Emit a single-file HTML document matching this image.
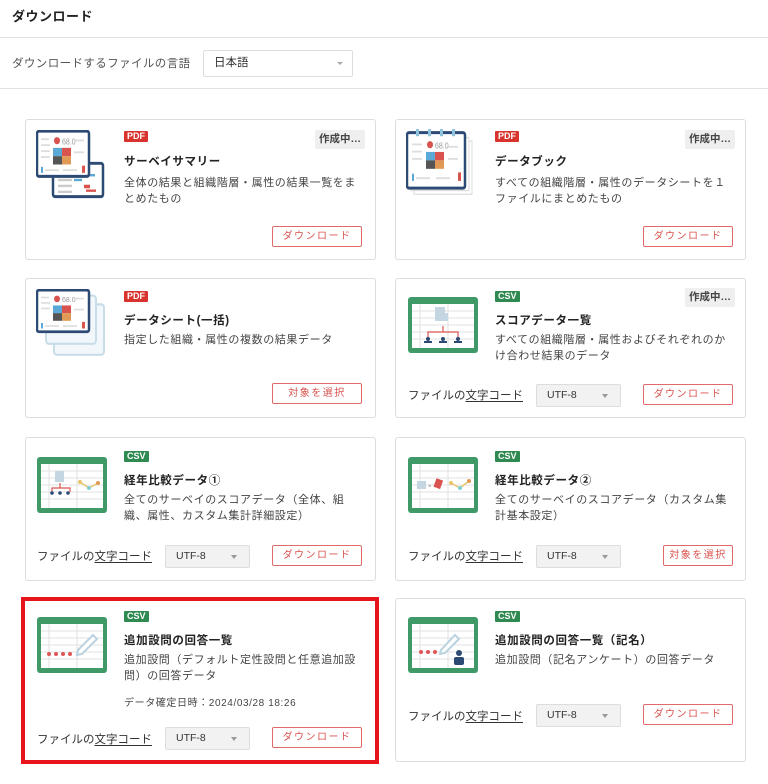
<!DOCTYPE html>
<html><head><meta charset="utf-8"><style>
*{margin:0;padding:0;box-sizing:border-box}
body{width:768px;height:784px;background:#fff;font-family:"Liberation Sans","Noto Sans CJK JP",sans-serif;color:#333;position:relative;overflow:hidden}
.a{position:absolute}
.card{position:absolute;border:1px solid #ddd;border-radius:3px;background:#fff}
.badge{position:absolute;font-size:9px;font-weight:bold;color:#fff;padding:0 3px;line-height:11px;border-radius:1px;font-family:"Liberation Sans",sans-serif}
.pdf{background:#d9332e}.csv{background:#2e8a50}
.ttl{position:absolute;font-size:11.5px;font-weight:bold;color:#222;letter-spacing:.6px;white-space:nowrap}
.desc{position:absolute;font-size:11px;line-height:16px;color:#444;letter-spacing:.6px;width:236px}
.btn{position:absolute;height:21px;border:1px solid #e06a6a;border-radius:2px;color:#d9534f;font-size:10px;text-align:center;line-height:20px;letter-spacing:1.5px;background:#fff}
.busy{position:absolute;background:#efefef;font-size:10.5px;font-weight:bold;color:#444;padding:0 4px;line-height:19px;border-radius:2px}
.fc{position:absolute;font-size:11.5px;color:#333;letter-spacing:0;white-space:nowrap}
.fc u{text-decoration:underline;text-underline-offset:2px}
.sel{position:absolute;width:85px;height:23px;background:#f2f2f2;border:1px solid #ddd;border-radius:2px;font-size:10.5px;color:#333;line-height:21px;padding-left:10px}
.sel:after{content:"";position:absolute;right:12px;top:9px;border:3px solid transparent;border-top:4px solid #999}
</style></head><body>
<div class="a" style="left:12px;top:6px;font-size:13px;font-weight:bold;color:#222;letter-spacing:.5px">ダウンロード</div>
<div class="a" style="left:0;top:37px;width:768px;height:1px;background:#e2e2e2"></div>
<div class="a" style="left:12px;top:55px;font-size:11.5px;color:#555;letter-spacing:.4px">ダウンロードするファイルの言語</div>
<div class="a" style="left:203px;top:50px;width:150px;height:27px;border:1px solid #ddd;border-radius:2px;font-size:11.5px;line-height:25px;padding-left:10px;color:#333">日本語<span style="position:absolute;right:9px;top:11px;border:3px solid transparent;border-top:3px solid #aaa"></span></div>
<div class="a" style="left:0;top:88px;width:768px;height:1px;background:#e2e2e2"></div>

<!-- Row1 left -->
<div class="card" style="left:25px;top:119px;width:351px;height:141px"></div>
<svg class="a" style="left:36px;top:130px" width="70" height="69" viewBox="0 0 70 58" preserveAspectRatio="none">
<rect x="17" y="28" width="50" height="28" rx="2" fill="#fff" stroke="#2c4a73" stroke-width="2.5"/>
<g fill="#ccc"><rect x="22" y="36" width="14" height="2"/><rect x="22" y="41" width="14" height="2"/><rect x="22" y="46" width="14" height="2"/><rect x="22" y="51" width="14" height="2"/></g>
<rect x="47" y="37" width="12" height="2" fill="#5aa9d6"/><rect x="38" y="41" width="8" height="2" fill="#5aa9d6"/><rect x="48" y="46" width="6" height="3" fill="#d9534f"/><rect x="50" y="50" width="10" height="2" fill="#d9534f"/>
<rect x="1" y="1" width="52" height="38" rx="2" fill="#fff" stroke="#2c4a73" stroke-width="2.5"/>
<circle cx="21" cy="9" r="3" fill="#d9534f"/><text x="26" y="12" font-size="7" fill="#999" font-family="Liberation Sans">68.0</text>
<rect x="17" y="15" width="9" height="7" fill="#5aa9d6"/><rect x="26" y="15" width="9" height="7" fill="#d9534f"/><rect x="17" y="22" width="9" height="7" fill="#555"/><rect x="26" y="22" width="9" height="7" fill="#e19a56"/>
<g fill="#ddd"><rect x="5" y="7" width="8" height="1.5"/><rect x="5" y="12" width="9" height="1.5"/><rect x="5" y="17" width="9" height="1.5"/><rect x="5" y="22" width="9" height="1.5"/><rect x="38" y="8" width="10" height="1.5"/><rect x="38" y="18" width="10" height="1.5"/><rect x="9" y="33" width="14" height="1.5"/><rect x="27" y="33" width="14" height="1.5"/></g>
<rect x="5" y="31" width="2" height="5" fill="#5aa9d6"/><rect x="46" y="30" width="3" height="6" fill="#d9534f"/>
</svg>
<div class="badge pdf" style="left:124px;top:131px">PDF</div>
<div class="busy" style="left:315px;top:130px">作成中…</div>
<div class="ttl" style="left:124px;top:153px">サーベイサマリー</div>
<div class="desc" style="left:124px;top:175px">全体の結果と組織階層・属性の結果一覧をまとめたもの</div>
<div class="btn" style="left:272px;top:226px;width:90px">ダウンロード</div>

<!-- Row1 right -->
<div class="card" style="left:395px;top:119px;width:351px;height:141px"></div>
<svg class="a" style="left:406px;top:129px" width="72" height="70" viewBox="0 0 72 58" preserveAspectRatio="none">
<rect x="8" y="10" width="58" height="44" fill="#fff" stroke="#ddd"/><rect x="5" y="7" width="58" height="44" fill="#fff" stroke="#ddd"/>
<rect x="1" y="3" width="58" height="46" rx="2" fill="#fff" stroke="#2c4a73" stroke-width="2.5"/>
<g fill="#8fc3dc"><rect x="10" y="0" width="3" height="6"/><rect x="22" y="0" width="3" height="6"/><rect x="34" y="0" width="3" height="6"/><rect x="46" y="0" width="3" height="6"/></g>
<circle cx="24" cy="13" r="3" fill="#d9534f"/><text x="29" y="16" font-size="7" fill="#999" font-family="Liberation Sans">68.0</text>
<rect x="20" y="19" width="9" height="7" fill="#5aa9d6"/><rect x="29" y="19" width="9" height="7" fill="#d9534f"/><rect x="20" y="26" width="9" height="7" fill="#555"/><rect x="29" y="26" width="9" height="7" fill="#e19a56"/>
<g fill="#ddd"><rect x="6" y="12" width="10" height="1.5"/><rect x="6" y="18" width="10" height="1.5"/><rect x="6" y="24" width="10" height="1.5"/><rect x="42" y="14" width="10" height="1.5"/><rect x="42" y="24" width="10" height="1.5"/><rect x="10" y="40" width="14" height="1.5"/><rect x="30" y="40" width="14" height="1.5"/></g>
<rect x="6" y="37" width="2" height="6" fill="#5aa9d6"/><rect x="52" y="36" width="3" height="7" fill="#d9534f"/>
</svg>
<div class="badge pdf" style="left:495px;top:131px">PDF</div>
<div class="busy" style="left:685px;top:130px">作成中…</div>
<div class="ttl" style="left:495px;top:153px">データブック</div>
<div class="desc" style="left:495px;top:175px">すべての組織階層・属性のデータシートを１ファイルにまとめたもの</div>
<div class="btn" style="left:643px;top:226px;width:90px">ダウンロード</div>

<!-- Row2 left -->
<div class="card" style="left:25px;top:278px;width:351px;height:140px"></div>
<svg class="a" style="left:36px;top:289px" width="70" height="68" viewBox="0 0 70 62" preserveAspectRatio="none">
<rect x="18" y="14" width="50" height="46" rx="3" fill="#f1f7fb" stroke="#c9dde8" stroke-width="2"/>
<rect x="10" y="6" width="50" height="44" rx="3" fill="#f1f7fb" stroke="#c9dde8" stroke-width="2"/>
<rect x="1" y="1" width="52" height="38" rx="2" fill="#fff" stroke="#2c4a73" stroke-width="2.5"/>
<circle cx="21" cy="9" r="3" fill="#d9534f"/><text x="26" y="12" font-size="7" fill="#999" font-family="Liberation Sans">68.0</text>
<rect x="17" y="15" width="9" height="7" fill="#5aa9d6"/><rect x="26" y="15" width="9" height="7" fill="#d9534f"/><rect x="17" y="22" width="9" height="7" fill="#555"/><rect x="26" y="22" width="9" height="7" fill="#e19a56"/>
<g fill="#ddd"><rect x="5" y="7" width="8" height="1.5"/><rect x="5" y="12" width="9" height="1.5"/><rect x="5" y="17" width="9" height="1.5"/><rect x="38" y="8" width="10" height="1.5"/><rect x="38" y="18" width="10" height="1.5"/><rect x="9" y="33" width="14" height="1.5"/><rect x="27" y="33" width="14" height="1.5"/></g>
<rect x="5" y="31" width="2" height="5" fill="#5aa9d6"/><rect x="46" y="30" width="3" height="6" fill="#d9534f"/>
</svg>
<div class="badge pdf" style="left:124px;top:291px">PDF</div>
<div class="ttl" style="left:124px;top:312px">データシート(一括)</div>
<div class="desc" style="left:124px;top:332px">指定した組織・属性の複数の結果データ</div>
<div class="btn" style="left:272px;top:383px;width:90px">対象を選択</div>

<!-- Row2 right -->
<div class="card" style="left:395px;top:278px;width:351px;height:140px"></div>
<svg class="a" style="left:408px;top:297px" width="70" height="56" viewBox="0 0 70 56">
<rect x="0" y="0" width="70" height="56" rx="3" fill="#3f9a68"/><rect x="4" y="7" width="62" height="44" fill="#fff"/>
<g stroke="#e2e2e2" fill="none"><path d="M4 14H66M4 21H66M4 28H66M4 35H66M4 42H66M12 7V51M40 7V51"/></g>
<rect x="27" y="10" width="10" height="14" fill="#c4d6e2"/><rect x="33" y="16" width="7" height="8" fill="#c4d6e2"/>
<path d="M20 41V35H50V41M35 29V35" stroke="#d9534f" fill="none" stroke-width="1.2"/>
<g fill="#2c4a73"><circle cx="20" cy="42" r="2"/><circle cx="35" cy="42" r="2"/><circle cx="50" cy="42" r="2"/><rect x="16" y="44" width="8" height="2"/><rect x="31" y="44" width="8" height="2"/><rect x="46" y="44" width="8" height="2"/></g>
</svg>
<div class="badge csv" style="left:495px;top:291px">CSV</div>
<div class="busy" style="left:685px;top:288px">作成中…</div>
<div class="ttl" style="left:495px;top:312px">スコアデータ一覧</div>
<div class="desc" style="left:495px;top:332px">すべての組織階層・属性およびそれぞれのかけ合わせ結果のデータ</div>
<div class="fc" style="left:408px;top:387px">ファイルの<u>文字コード</u></div>
<div class="sel" style="left:536px;top:384px">UTF-8</div>
<div class="btn" style="left:643px;top:384px;width:90px">ダウンロード</div>

<!-- Row3 left -->
<div class="card" style="left:25px;top:437px;width:351px;height:144px"></div>
<svg class="a" style="left:37px;top:457px" width="70" height="56" viewBox="0 0 70 56">
<rect x="0" y="0" width="70" height="56" rx="3" fill="#3f9a68"/><rect x="4" y="7" width="62" height="44" fill="#fff"/>
<g stroke="#e2e2e2" fill="none"><path d="M4 14H66M4 21H66M4 28H66M4 35H66M4 42H66M12 7V51M40 7V51"/></g>
<rect x="18" y="14" width="9" height="11" fill="#c4d6e2"/>
<path d="M15 35V31H33V35M23 26V31" stroke="#d9534f" fill="none" stroke-width="1.2"/>
<g fill="#2c4a73"><circle cx="15" cy="36" r="1.8"/><circle cx="23" cy="36" r="1.8"/><circle cx="31" cy="36" r="1.8"/></g>
<path d="M43 25L52 31L61 26" stroke="#e9c46a" fill="none" stroke-width="1.5"/><circle cx="43" cy="25" r="2" fill="#e9c46a"/><circle cx="52" cy="31" r="2" fill="#7fd0d6"/><circle cx="61" cy="26" r="2" fill="#e19a56"/>
</svg>
<div class="badge csv" style="left:124px;top:451px">CSV</div>
<div class="ttl" style="left:124px;top:472px">経年比較データ①</div>
<div class="desc" style="left:124px;top:492px;width:229px">全てのサーベイのスコアデータ（全体、組織、属性、カスタム集計詳細設定）</div>
<div class="fc" style="left:37px;top:548px">ファイルの<u>文字コード</u></div>
<div class="sel" style="left:165px;top:545px">UTF-8</div>
<div class="btn" style="left:272px;top:545px;width:90px">ダウンロード</div>

<!-- Row3 right -->
<div class="card" style="left:395px;top:437px;width:351px;height:144px"></div>
<svg class="a" style="left:408px;top:457px" width="70" height="56" viewBox="0 0 70 56">
<rect x="0" y="0" width="70" height="56" rx="3" fill="#3f9a68"/><rect x="4" y="7" width="62" height="44" fill="#fff"/>
<g stroke="#e2e2e2" fill="none"><path d="M4 14H66M4 21H66M4 28H66M4 35H66M4 42H66M12 7V51M40 7V51"/></g>
<rect x="9" y="24" width="9" height="8" fill="#c4d6e2"/><text x="20" y="31" font-size="6" fill="#888" font-family="Liberation Sans">×</text>
<rect x="27" y="22" width="7" height="9" fill="#d9534f" transform="rotate(20 30 26)"/>
<path d="M43 26L52 31L61 24" stroke="#e9c46a" fill="none" stroke-width="1.5"/><circle cx="43" cy="26" r="2" fill="#e9c46a"/><circle cx="52" cy="31" r="2" fill="#7fd0d6"/><circle cx="61" cy="24" r="2" fill="#e19a56"/>
</svg>
<div class="badge csv" style="left:495px;top:451px">CSV</div>
<div class="ttl" style="left:495px;top:472px">経年比較データ②</div>
<div class="desc" style="left:495px;top:492px">全てのサーベイのスコアデータ（カスタム集計基本設定）</div>
<div class="fc" style="left:408px;top:548px">ファイルの<u>文字コード</u></div>
<div class="sel" style="left:536px;top:545px">UTF-8</div>
<div class="btn" style="left:663px;top:545px;width:70px">対象を選択</div>

<!-- Row4 left -->
<div class="a" style="left:21px;top:597px;width:358px;height:167px;border:4px solid #e8141c"></div>
<div class="a" style="left:25px;top:601px;width:350px;height:159px;background:#fff"></div>
<svg class="a" style="left:37px;top:617px" width="70" height="56" viewBox="0 0 70 56">
<rect x="0" y="0" width="70" height="56" rx="3" fill="#3f9a68"/><rect x="4" y="7" width="62" height="44" fill="#fff"/>
<g stroke="#e2e2e2" fill="none"><path d="M4 14H66M4 21H66M4 28H66M4 35H66M4 42H66M12 7V51M40 7V51"/></g>
<g fill="#e05555"><circle cx="12" cy="37" r="2"/><circle cx="19" cy="37" r="2"/><circle cx="26" cy="37" r="2"/><circle cx="33" cy="37" r="2"/></g>
<path d="M41 33L56 18L60 22L45 37L40 38Z" fill="#fff" stroke="#b8d2df" stroke-width="2"/>
</svg>
<div class="badge csv" style="left:124px;top:611px">CSV</div>
<div class="ttl" style="left:124px;top:632px">追加設問の回答一覧</div>
<div class="desc" style="left:124px;top:652px">追加設問（デフォルト定性設問と任意追加設問）の回答データ</div>
<div class="a" style="left:124px;top:694px;font-size:10px;color:#444;letter-spacing:.6px">データ確定日時：2024/03/28 18:26</div>
<div class="fc" style="left:37px;top:731px">ファイルの<u>文字コード</u></div>
<div class="sel" style="left:165px;top:727px">UTF-8</div>
<div class="btn" style="left:272px;top:727px;width:90px">ダウンロード</div>

<!-- Row4 right -->
<div class="card" style="left:395px;top:598px;width:351px;height:164px"></div>
<svg class="a" style="left:408px;top:617px" width="70" height="56" viewBox="0 0 70 56">
<rect x="0" y="0" width="70" height="56" rx="3" fill="#3f9a68"/><rect x="4" y="7" width="62" height="44" fill="#fff"/>
<g stroke="#e2e2e2" fill="none"><path d="M4 14H66M4 21H66M4 28H66M4 35H66M4 42H66M12 7V51M40 7V51"/></g>
<g fill="#e05555"><circle cx="13" cy="35" r="2"/><circle cx="20" cy="35" r="2"/><circle cx="27" cy="35" r="2"/></g>
<path d="M33 33L47 18L51 22L37 36L32 37Z" fill="#fff" stroke="#b8d2df" stroke-width="2"/>
<circle cx="51" cy="36" r="3" fill="#2c4a73"/><rect x="46" y="40" width="10" height="8" rx="2" fill="#2c4a73"/>
</svg>
<div class="badge csv" style="left:495px;top:611px">CSV</div>
<div class="ttl" style="left:495px;top:632px">追加設問の回答一覧（記名）</div>
<div class="desc" style="left:495px;top:652px">追加設問（記名アンケート）の回答データ</div>
<div class="fc" style="left:408px;top:708px">ファイルの<u>文字コード</u></div>
<div class="sel" style="left:536px;top:704px">UTF-8</div>
<div class="btn" style="left:643px;top:704px;width:90px">ダウンロード</div>
</body></html>
